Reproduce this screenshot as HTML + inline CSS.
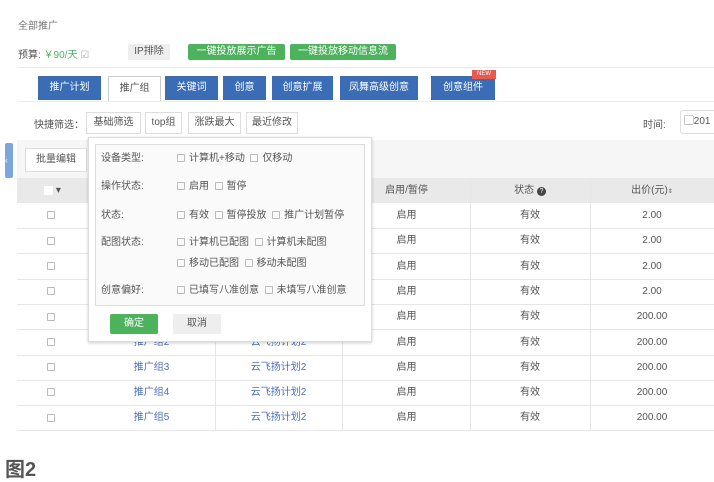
<!DOCTYPE html><html><head><meta charset="utf-8"><style>
body{margin:0;width:714px;height:479px;background:#fff;font-family:"Liberation Sans","Noto Sans CJK SC",sans-serif;font-size:10px;color:#555;position:relative;overflow:hidden}
.a{position:absolute;white-space:nowrap}
.tab{position:absolute;top:76px;height:24px;line-height:24px;background:#3a6db5;color:#fff;text-align:center;font-size:10px}
.gb{position:absolute;top:44px;height:16px;line-height:16px;background:#4cb35c;color:#fff;text-align:center;border-radius:2px}
.qb{position:absolute;top:112px;height:20px;line-height:20px;border:1px solid #ddd;text-align:center;font-size:10px;color:#555}
.cb{display:inline-block;width:6px;height:6px;border:1px solid #bbb;border-radius:1px;vertical-align:middle;margin-right:4px}
.row{position:absolute;left:17px;width:697px;height:25px;border-bottom:1px solid #e6e6e6}
.c{position:absolute;top:0;height:25px;line-height:25px;text-align:center;border-right:1px solid #e6e6e6}
.pl{position:absolute;left:100px;font-size:10px}
.po{position:absolute;left:178px}
</style></head><body>
<div class="a" style="left:18px;top:17px;color:#777">全部推广</div>
<div class="a" style="left:18px;top:46px">预算: <span style="color:#4cb35c">￥90/天</span> <span style="color:#aaa">☑</span></div>
<div class="a" style="left:128px;top:44px;width:42px;height:16px;line-height:16px;background:#eee;text-align:center">IP排除</div>
<div class="gb" style="left:188px;width:97px">一键投放展示广告</div>
<div class="gb" style="left:290px;width:106px">一键投放移动信息流</div>
<div class="a" style="left:18px;top:67px;width:696px;height:1px;background:#e8e8e8"></div>
<div class="tab" style="left:38px;width:63px">推广计划</div>
<div class="tab" style="left:108px;width:51px;background:#fff;color:#555;border:1px solid #ccc;border-bottom:none;height:24px">推广组</div>
<div class="tab" style="left:165px;width:53px">关键词</div>
<div class="tab" style="left:223px;width:43px">创意</div>
<div class="tab" style="left:272px;width:61px">创意扩展</div>
<div class="tab" style="left:340px;width:78px">凤舞高级创意</div>
<div class="tab" style="left:431px;width:64px">创意组件</div>
<div class="a" style="left:472px;top:70px;width:24px;height:9px;background:#e85a4f;color:#fff;font-size:6px;line-height:9px;text-align:center">NEW</div>
<div class="a" style="left:18px;top:101px;width:696px;height:1px;background:#eee"></div>
<div class="a" style="left:34px;top:116px">快捷筛选：</div>
<div class="qb" style="left:86px;width:53px">基础筛选</div>
<div class="qb" style="left:145px;width:35px">top组</div>
<div class="qb" style="left:188px;width:51px">涨跌最大</div>
<div class="qb" style="left:246px;width:50px">最近修改</div>
<div class="a" style="left:643px;top:116px">时间:</div>
<div class="a" style="left:680px;top:110px;width:40px;height:22px;line-height:22px;border:1px solid #ddd;border-radius:3px">&nbsp;▢201</div>
<div class="a" style="left:5px;top:143px;width:8px;height:35px;background:#7ea6dc;border-radius:2px;color:#fff;font-size:8px;line-height:35px">‹</div>
<div class="a" style="left:17px;top:140px;width:697px;height:38px;background:#f6f6f6"></div>
<div class="a" style="left:25px;top:148px;width:60px;height:22px;line-height:22px;background:#fff;border:1px solid #ddd;text-align:center">批量编辑</div>
<div class="row" style="top:178px;background:#e9e9e9;border:none">
<div class="c" style="left:0;width:71px"><span style="display:inline-block;width:9px;height:9px;background:#fff;vertical-align:middle"></span> ▾</div>
<div class="c" style="left:326px;width:127px">启用/暂停</div>
<div class="c" style="left:453px;width:120px">状态 <span style="display:inline-block;width:9px;height:9px;border-radius:50%;background:#444;color:#fff;font-size:7px;line-height:9px">?</span></div>
<div class="c" style="left:573px;width:124px;border:none">出价(元)<span style="font-size:6px">⇕</span></div>
</div>
<div id="rows"></div>
<script>
var t=['2.00','2.00','2.00','2.00','200.00','200.00','200.00','200.00','200.00'],h='';
for(var i=0;i<9;i++){var y=203+i*25.3;h+='<div class="row" style="top:'+y+'px"><div class="c" style="left:0;width:71px;border:none"><span class="cb"></span></div><div class="c" style="left:71px;width:127px;color:#4a6fb5">推广组'+(i-3)+'</div><div class="c" style="left:198px;width:127px;color:#4a6fb5">云飞扬计划2</div><div class="c" style="left:326px;width:127px">启用</div><div class="c" style="left:453px;width:120px">有效</div><div class="c" style="left:573px;width:124px;border:none">'+t[i]+'</div></div>';}
document.getElementById('rows').innerHTML=h;
</script>
<div class="a" style="left:88px;top:137px;width:282px;height:203px;background:#fff;border:1px solid #ddd;box-shadow:0 1px 3px rgba(0,0,0,.2)">
<div style="position:absolute;left:6px;top:6px;width:268px;height:160px;background:#fafafa;border:1px solid #ddd"></div>
<div style="position:absolute;left:0;top:-5px;width:282px">
<div class="pl" style="left:12px;top:16px">设备类型:</div><div class="po" style="left:88px;top:16px"><span class="cb"></span>计算机+移动 &nbsp;<span class="cb"></span>仅移动</div>
<div class="pl" style="left:12px;top:44px">操作状态:</div><div class="po" style="left:88px;top:44px"><span class="cb"></span>启用 &nbsp;<span class="cb"></span>暂停</div>
<div class="pl" style="left:12px;top:73px">状态:</div><div class="po" style="left:88px;top:73px"><span class="cb"></span>有效 &nbsp;<span class="cb"></span>暂停投放 &nbsp;<span class="cb"></span>推广计划暂停</div>
<div class="pl" style="left:12px;top:100px">配图状态:</div><div class="po" style="left:88px;top:100px"><span class="cb"></span>计算机已配图 &nbsp;<span class="cb"></span>计算机未配图</div>
<div class="po" style="left:88px;top:121px"><span class="cb"></span>移动已配图 &nbsp;<span class="cb"></span>移动未配图</div>
<div class="pl" style="left:12px;top:148px">创意偏好:</div><div class="po" style="left:88px;top:148px"><span class="cb"></span>已填写八准创意 &nbsp;<span class="cb"></span>未填写八准创意</div>
</div>
<div style="position:absolute;left:21px;top:176px;width:48px;height:20px;line-height:20px;background:#4cb35c;color:#fff;text-align:center;border-radius:2px">确定</div>
<div style="position:absolute;left:84px;top:176px;width:48px;height:20px;line-height:20px;background:#eee;text-align:center">取消</div>
</div>
<div class="a" style="left:5px;top:453px;font-size:20px;font-weight:bold;color:#555">图2</div>
</body></html>
